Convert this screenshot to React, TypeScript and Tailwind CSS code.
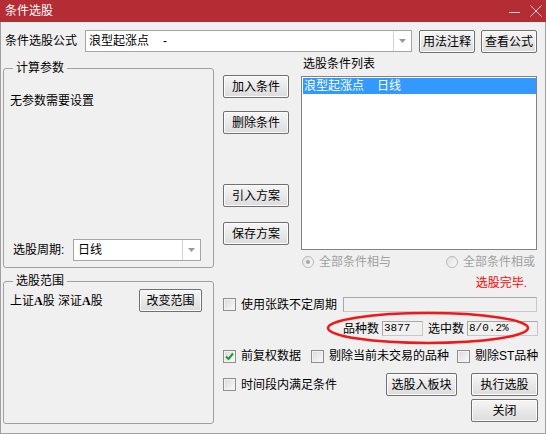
import type { ReactNode } from "react";

function Btn({ children, className = "" }: { children: ReactNode; className?: string }) {
  return (
    <button
      className={`h-[23px] border border-[#707070] rounded-[2px] bg-linear-to-b from-[#f6f6f6] to-[#dcdcdc] shadow-[inset_0_0_0_1px_#fcfcfc] text-[12px] leading-none text-black ${className}`}
    >
      {children}
    </button>
  );
}

function Combo({ value, className = "" }: { value: ReactNode; className?: string }) {
  return (
    <div className={`h-[22px] flex bg-white border border-[#a5a5a5] ${className}`}>
      <div className="flex-1 flex items-center pl-[3px] leading-none">{value}</div>
      <div className="w-[18px] border-l border-[#d4d4d4] flex items-center justify-center">
        <svg width="7" height="4" viewBox="0 0 7 4">
          <path d="M0 0 H7 L3.5 4 Z" fill="#9a9a9a" />
        </svg>
      </div>
    </div>
  );
}

function Check({ checked = false, label, className = "" }: { checked?: boolean; label: ReactNode; className?: string }) {
  return (
    <div className={`flex items-center gap-[5px] ${className}`}>
      <span className="w-[13px] h-[13px] border border-[#8f8f8f] bg-linear-to-br from-[#dadada] to-[#fafafa] shadow-[inset_0_0_0_1px_#f2f2f2] flex items-center justify-center">
        {checked && (
          <svg width="11" height="11" viewBox="0 0 11 11">
            <path d="M2 5.5 L4.5 8 L9 2.5" fill="none" stroke="#1f9a2a" strokeWidth="2" />
          </svg>
        )}
      </span>
      <span className="leading-[14px] whitespace-nowrap">{label}</span>
    </div>
  );
}

function Radio({ on = false, label }: { on?: boolean; label: string }) {
  return (
    <div className="flex items-center gap-[5px] text-[#a0a0a0]">
      <span className="w-[12px] h-[12px] rounded-full border border-[#b8b8b8] bg-linear-to-br from-[#e2e2e2] to-[#f8f8f8] flex items-center justify-center">
        {on && <span className="w-[4px] h-[4px] rounded-full bg-[#a8a8a8]" />}
      </span>
      <span className="leading-[14px]">{label}</span>
    </div>
  );
}

function Group({ title, className = "", children }: { title: string; className?: string; children: ReactNode }) {
  return (
    <div className={`relative border border-[#a0a0a0] rounded-[3px] ${className}`}>
      <span className="absolute -top-[8px] left-[9px] px-[3px] bg-[#f0f0f0] leading-[14px]">{title}</span>
      {children}
    </div>
  );
}

function Field({ children, className = "" }: { children?: ReactNode; className?: string }) {
  return (
    <div
      className={`h-[15px] bg-[#f0f0f0] border border-[#c8c8c8] border-t-[#a8a8a8] border-l-[#a8a8a8] pl-[1px] flex items-center leading-none font-['Liberation_Mono',monospace] text-[11px] ${className}`}
    >
      {children}
    </div>
  );
}

export default function App() {
  return (
    <div className="relative w-[546px] h-[434px] bg-[#f0f0f0] flex flex-col overflow-hidden text-[12px] text-black font-['Liberation_Sans','Noto_Sans_CJK_SC',sans-serif]">
      {/* title bar */}
      <div className="h-[22px] bg-[#b52d34] flex items-center pl-[5px] text-white">
        <span className="leading-none">条件选股</span>
        <div className="ml-auto flex items-center gap-[10px] pr-[4px]">
          <svg width="11" height="11" viewBox="0 0 11 11">
            <path d="M0 6.5 H11" stroke="#f2cfd1" strokeWidth="1" />
          </svg>
          <svg width="12" height="12" viewBox="0 0 12 12">
            <path d="M0.5 0.5 L11.5 11.5 M11.5 0.5 L0.5 11.5" stroke="#f2cfd1" strokeWidth="1" />
          </svg>
        </div>
      </div>

      <div className="flex-1 flex flex-col border-x border-b border-[#a0a0a0]">
        {/* formula row */}
        <div className="flex items-start pt-[8px] pl-[4px]">
          <span className="w-[72px] leading-[22px]">条件选股公式</span>
          <Combo
            className="ml-[8px] w-[327px]"
            value={
              <>
                <span>浪型起涨点</span>
                <span className="ml-[14px]">-</span>
              </>
            }
          />
          <Btn className="ml-[7px] w-[56px]">用法注释</Btn>
          <Btn className="ml-[6px] w-[56px]">查看公式</Btn>
        </div>

        <div className="flex">
          {/* left column */}
          <div className="ml-[2px] w-[211px] flex flex-col">
            <Group title="计算参数" className="mt-[15px] h-[200px] flex flex-col">
              <div className="mt-[25px] pl-[6px] leading-[14px]">无参数需要设置</div>
              <div className="mt-auto mb-[6px] pl-[9px] flex items-center">
                <span className="w-[60px]">选股周期:</span>
                <Combo className="w-[128px]" value={<span className="pl-[1px]">日线</span>} />
              </div>
            </Group>
            <Group title="选股范围" className="mt-[13px] h-[143px]">
              <div className="mt-[7px] pl-[6px] pr-[11px] flex items-center justify-between">
                <span>
                  上证<b className="font-['Liberation_Serif']">A</b>股 深证<b className="font-['Liberation_Serif']">A</b>股
                </span>
                <Btn className="w-[63px]">改变范围</Btn>
              </div>
            </Group>
          </div>

          {/* right area */}
          <div className="ml-[9px] w-[315px] flex flex-col">
            <div className="flex">
              <div className="w-[66px] pt-[22px] flex flex-col">
                <Btn>加入条件</Btn>
                <Btn className="mt-[13px]">删除条件</Btn>
                <Btn className="mt-[50px]">引入方案</Btn>
                <Btn className="mt-[15px]">保存方案</Btn>
              </div>
              <div className="ml-[12px] w-[236px] flex flex-col">
                <div className="mt-[4px] pl-[2px] leading-[14px]">选股条件列表</div>
                <div className="mt-[5px] h-[174px] bg-white border border-[#828282] pl-[1px] pt-[1px]">
                  <div className="h-[16px] bg-[#3399ff] text-white flex items-center pl-[1px] leading-none">
                    <span>浪型起涨点</span>
                    <span className="ml-[13px]">日线</span>
                  </div>
                </div>
              </div>
            </div>

            <div className="mt-[5px] h-[14px] flex items-center pl-[79px] pr-[3px]">
              <Radio on label="全部条件相与" />
              <div className="ml-auto">
                <Radio label="全部条件相或" />
              </div>
            </div>

            <div className="mt-[7px] h-[14px] flex items-center justify-end pr-[11px] text-[#ff0000] leading-[14px]">
              选股完毕.
            </div>

            <div className="mt-[7px] h-[15px] flex items-center">
              <Check label="使用张跌不定周期" />
              <Field className="ml-auto mr-[1px] w-[194px]" />
            </div>

            <div className="mt-[9px] h-[15px] flex items-center justify-end">
              <span className="leading-none">品种数</span>
              <Field className="ml-[3px] w-[41px]">3877</Field>
              <span className="ml-[5px] leading-none">选中数</span>
              <Field className="ml-[3px] w-[71px]">8/0.2%</Field>
            </div>

            <div className="mt-[13px] h-[14px] flex items-center">
              <Check checked label="前复权数据" />
              <Check className="ml-[10px]" label="剔除当前未交易的品种" />
              <Check className="ml-[8px]" label="剔除ST品种" />
            </div>

            <div className="mt-[10px] flex items-center">
              <Check label="时间段内满足条件" />
              <Btn className="ml-auto w-[71px]">选股入板块</Btn>
              <Btn className="ml-[14px] w-[67px]">执行选股</Btn>
            </div>

            <div className="mt-[3px] flex justify-end">
              <Btn className="w-[67px]">关闭</Btn>
            </div>
          </div>
        </div>
      </div>

      {/* red annotation ring */}
      <svg className="absolute left-[325px] top-[310px]" width="206" height="36" viewBox="0 0 206 36">
        <ellipse cx="103" cy="18" rx="100" ry="15" fill="none" stroke="#f01818" strokeWidth="2.5" />
      </svg>
    </div>
  );
}
